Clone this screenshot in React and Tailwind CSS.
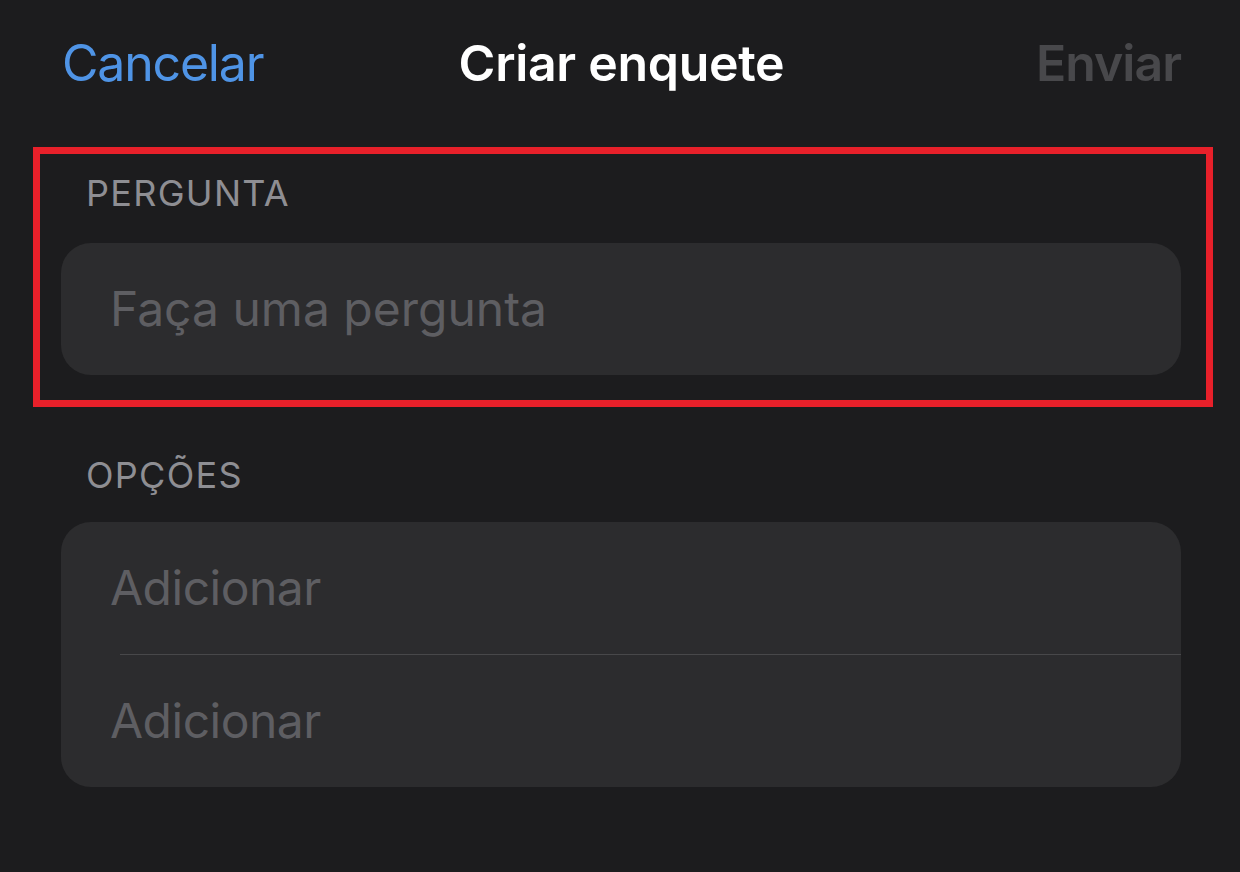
export default function App() {
  const font = { fontFamily: 'Inter, "Noto Sans", "Liberation Sans", sans-serif' };
  return (
    <div className="w-full h-[872px] bg-[#1c1c1e] overflow-hidden" style={font}>
      <header className="grid grid-cols-[1fr_auto_1fr] items-center h-[126px] pl-[62px] pr-[59px]">
        <span className="justify-self-start text-[50px] leading-none text-[#4f94e6] tracking-[-1.2px]">Cancelar</span>
        <span className="justify-self-center text-[50px] leading-none font-semibold text-white tracking-[-0.3px]">Criar enquete</span>
        <span className="justify-self-end text-[50px] leading-none font-semibold text-[#48484b] tracking-[-1px]">Enviar</span>
      </header>

      <section className="mt-[21px] ml-[33px] w-[1180px] border-[7px] border-[#e8202a] pl-[21px] pr-[25px] pt-[18px] pb-[25px]">
        <div className="ml-[25px] text-[36px] leading-[1.21] text-[#8e8e93] tracking-[1.3px]">PERGUNTA</div>
        <div className="mt-[27px] h-[132px] rounded-[30px] bg-[#2c2c2e] flex items-center pl-[49px]">
          <span className="text-[48px] leading-none text-[#5e5e62]">Faça uma pergunta</span>
        </div>
      </section>

      <section className="ml-[61px] w-[1120px]">
        <div className="mt-[47px] ml-[25px] text-[36px] leading-[1.21] text-[#8e8e93] tracking-[1.3px]">OPÇÕES</div>
        <div className="mt-[25px] rounded-[30px] bg-[#2c2c2e] overflow-hidden">
          <div className="h-[132px] flex items-center pl-[49px]">
            <span className="text-[48px] leading-none text-[#5e5e62] tracking-[-0.5px]">Adicionar</span>
          </div>
          <div className="ml-[59px] h-px bg-[#48484a]" />
          <div className="h-[132px] flex items-center pl-[49px]">
            <span className="text-[48px] leading-none text-[#5e5e62] tracking-[-0.5px]">Adicionar</span>
          </div>
        </div>
      </section>
    </div>
  );
}
